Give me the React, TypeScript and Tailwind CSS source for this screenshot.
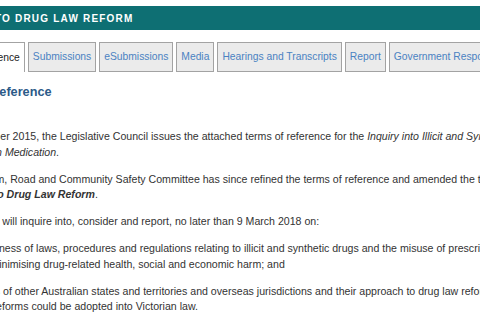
import React from 'react';

const tabs = [
  'Submissions',
  'eSubmissions',
  'Media',
  'Hearings and Transcripts',
  'Report',
  'Government Response',
];

const Tab: React.FC<{ label: string }> = ({ label }) => (
  <div className="h-[30px] shrink-0 px-[4px] flex items-center border border-[#a3a3a3] bg-[#ebebeb] text-[10.3px] text-[#4a82c2] whitespace-nowrap">
    {label}
  </div>
);

export default function App() {
  return (
    <div className="w-[480px] h-[320px] overflow-hidden bg-white font-['Liberation_Sans',Arial,sans-serif]">
      {/* page title bar */}
      <div className="pt-[6px]">
        <div className="h-[24px] bg-[#0e6f73] flex items-center overflow-hidden">
          <span className="-ml-[71px] whitespace-nowrap text-white font-bold text-[10px] tracking-[1.2px]">
            INQUIRY INTO DRUG LAW REFORM
          </span>
        </div>
      </div>

      {/* tabs */}
      <div className="mt-[12px] flex gap-[3px]">
        <div className="h-[30px] shrink-0 -ml-[75px] px-[4px] flex items-center border-x border-t border-[#a3a3a3] bg-white text-[10.3px] text-[#222] whitespace-nowrap">
          Terms of Reference
        </div>
        {tabs.map((t) => (
          <Tab key={t} label={t} />
        ))}
      </div>

      <h2 className="mt-[12px] -ml-[66px] whitespace-nowrap text-[12.7px] leading-[16px] font-bold text-[#2c5a88]">
        Terms of Reference
      </h2>

      <div className="mt-[29px] text-[10.6px] leading-[15.5px] text-[#333] whitespace-nowrap">
        <div className="mb-[11.5px]">
          <div className="-ml-[71px]">
            On 25 November 2015, the Legislative Council issues the attached terms of reference for the{' '}
            <i>Inquiry into Illicit and Synthetic Drugs and</i>
          </div>
          <div className="-ml-[54px]">
            <i>Prescription Medication</i>.
          </div>
        </div>

        <div className="mb-[11.5px]">
          <div className="-ml-[74px]">
            The Law Reform, Road and Community Safety Committee has since refined the terms of reference and amended the title of the inquiry to
          </div>
          <div className="-ml-[54px]">
            <b><i>Inquiry into Drug Law Reform</i></b>.
          </div>
        </div>

        <div className="mb-[11.5px] -ml-[73px]">
          The Committee will inquire into, consider and report, no later than 9 March 2018 on:
        </div>

        <div className="mb-[11.5px]">
          <div className="-ml-[58px]">
            the effectiveness of laws, procedures and regulations relating to illicit and synthetic drugs and the misuse of prescription
          </div>
          <div className="-ml-[75px]">
            medication in minimising drug-related health, social and economic harm; and
          </div>
        </div>

        <div className="mb-[11.5px]">
          <div className="-ml-[60px]">
            the practices of other Australian states and territories and overseas jurisdictions and their approach to drug law reform and
          </div>
          <div className="-ml-[72px]">
            how effective reforms could be adopted into Victorian law.
          </div>
        </div>
      </div>
    </div>
  );
}
